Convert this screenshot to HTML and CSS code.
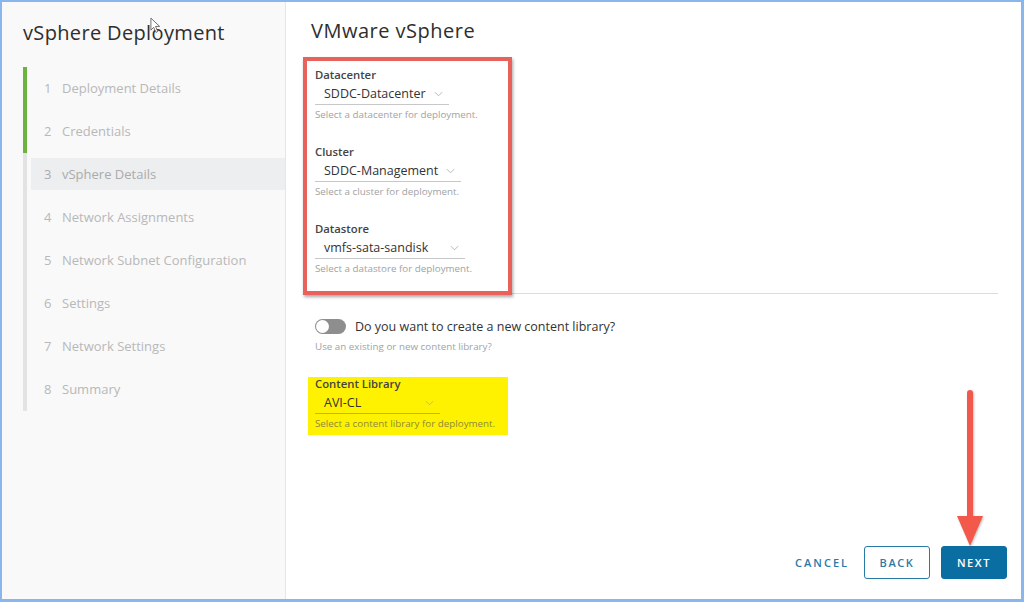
FILE: index.html
```html
<!DOCTYPE html>
<html lang="en">
<head>
<meta charset="utf-8">
<title>vSphere Deployment</title>
<link rel="stylesheet" href="styles.css">
</head>
<body>
<div class="frame">
  <aside class="sidebar">
    <h1 class="side-title">vSphere Deployment</h1>
    <ol class="steps">
      <li class="step done"><div class="step-inner"><span class="num">1</span>Deployment Details</div></li>
      <li class="step done"><div class="step-inner"><span class="num">2</span>Credentials</div></li>
      <li class="step active"><div class="step-inner"><span class="num">3</span>vSphere Details</div></li>
      <li class="step"><div class="step-inner"><span class="num">4</span>Network Assignments</div></li>
      <li class="step"><div class="step-inner"><span class="num">5</span>Network Subnet Configuration</div></li>
      <li class="step"><div class="step-inner"><span class="num">6</span>Settings</div></li>
      <li class="step"><div class="step-inner"><span class="num">7</span>Network Settings</div></li>
      <li class="step"><div class="step-inner"><span class="num">8</span>Summary</div></li>
    </ol>
  </aside>
  <main class="main">
    <h2 class="main-title">VMware vSphere</h2>
    <div class="form">
      <section class="fields annotated">
        <div class="field">
          <label class="label">Datacenter</label>
          <div class="select w-dc"><span class="value">SDDC-Datacenter</span><svg class="chev" viewBox="0 0 10 6"><path d="M1 1l4 4 4-4"/></svg></div>
          <div class="help">Select a datacenter for deployment.</div>
        </div>
        <div class="field">
          <label class="label">Cluster</label>
          <div class="select w-cl"><span class="value">SDDC-Management</span><svg class="chev" viewBox="0 0 10 6"><path d="M1 1l4 4 4-4"/></svg></div>
          <div class="help">Select a cluster for deployment.</div>
        </div>
        <div class="field last">
          <label class="label">Datastore</label>
          <div class="select w-ds"><span class="value">vmfs-sata-sandisk</span><svg class="chev" viewBox="0 0 10 6"><path d="M1 1l4 4 4-4"/></svg></div>
          <div class="help">Select a datastore for deployment.</div>
        </div>
      </section>
      <hr class="divider">
      <div class="toggle-row">
        <span class="toggle"><span class="knob"></span></span>
        <span class="toggle-text">Do you want to create a new content library?</span>
      </div>
      <div class="help toggle-help">Use an existing or new content library?</div>
      <div class="field highlight">
        <label class="label">Content Library</label>
        <div class="select w-cl2"><span class="value">AVI-CL</span><svg class="chev" viewBox="0 0 10 6"><path d="M1 1l4 4 4-4"/></svg></div>
        <div class="help">Select a content library for deployment.</div>
      </div>
    </div>
    <div class="actions">
      <button class="btn flat">CANCEL</button>
      <button class="btn outline">BACK</button>
      <button class="btn primary">NEXT</button>
    </div>
    <svg class="arrow" viewBox="0 0 40 170" aria-hidden="true">
      <line x1="20" y1="5" x2="20" y2="135" />
      <polygon points="7,128 33,128 20,158" />
    </svg>
  </main>
  <svg class="cursor" viewBox="0 0 12 18" aria-hidden="true">
    <path d="M1 1v13l3-3 2.5 5.5 2-1L6 10h4.5z"/>
  </svg>
</div>
</body>
</html>
```
FILE: styles.css
```css
*, *::before, *::after { box-sizing: border-box; }
html, body { margin: 0; padding: 0; }
body {
  width: 1024px;
  height: 602px;
  overflow: hidden;
  font-family: "Open Sans", "Liberation Sans", sans-serif;
  color: #333;
  background: #fff;
}
.frame {
  position: relative;
  display: flex;
  width: 1024px;
  height: 602px;
  border: 2px solid #8ab6ee;
  border-right-width: 3px;
  border-bottom-width: 3px;
}
.sidebar {
  width: 284px;
  flex: none;
  background: #f9f9f9;
  border-right: 1px solid #e6e6e6;
  padding: 19px 0 0 21px;
}
.side-title {
  margin: 0;
  font-size: 20px;
  line-height: 24px;
  font-weight: 400;
  color: #2e2e2e;
  letter-spacing: 0.35px;
}
.steps {
  list-style: none;
  margin: 22px 0 0 0;
  padding: 0;
}
.step {
  height: 43px;
  border-left: 4px solid #e3e3e3;
  padding: 5px 0 6px 4px;
}
.step.done { border-left-color: #6db33f; }
.step-inner {
  height: 32px;
  display: flex;
  align-items: center;
  padding-left: 13px;
  font-size: 13px;
  color: #b8b8b8;
}
.step.active .step-inner { background: #eceef0; color: #ababab; }
.num { width: 18px; }

.main {
  position: relative;
  flex: 1;
  display: flex;
  flex-direction: column;
  padding: 17px 0 0 25px;
}
.main-title {
  margin: 0;
  font-size: 20px;
  line-height: 24px;
  font-weight: 400;
  color: #2e2e2e;
  letter-spacing: 0.5px;
}
.form { padding-left: 4px; margin-top: 25px; }
.fields { position: relative; padding-bottom: 17px; }
.annotated::before {
  content: "";
  position: absolute;
  left: -12px;
  top: -11px;
  width: 209px;
  height: 238px;
  border: 4px solid #e8615a;
  box-shadow: 1px 2px 3px rgba(0,0,0,0.35);
  z-index: 2;
  pointer-events: none;
}
.field { margin-bottom: 23px; }
.field.last { margin-bottom: 0; }
.label {
  display: block;
  font-size: 11.3px;
  line-height: 14px;
  font-weight: 600;
  color: #444;
}
.select {
  position: relative;
  height: 23px;
  display: flex;
  align-items: center;
  padding-left: 9px;
  border-bottom: 1px solid #c8c8c8;
}
.value { font-size: 12.5px; color: #333; }
.chev {
  position: absolute;
  right: 6px;
  top: 9px;
  width: 9px;
  height: 6px;
  fill: none;
  stroke: #b0b0b0;
  stroke-width: 1;
}
.w-dc { width: 134px; }
.w-cl { width: 146px; }
.w-ds { width: 150px; }
.w-cl2 { width: 125px; }
.help {
  margin-top: 3px;
  font-size: 9.8px;
  line-height: 14px;
  color: #a2a2a2;
}
.divider {
  margin: 0 0 0 -4px;
  width: 687px;
  border: 0;
  border-top: 1px solid #dcdcdc;
}
.toggle-row {
  margin-top: 24px;
  height: 16px;
  display: flex;
  align-items: center;
}
.toggle {
  position: relative;
  width: 31px;
  height: 15px;
  border-radius: 8px;
  background: #8e8e8e;
  margin-right: 9px;
}
.knob {
  position: absolute;
  left: 1px;
  top: 1px;
  width: 13px;
  height: 13px;
  border-radius: 50%;
  background: #fff;
}
.toggle-text { font-size: 12.5px; color: #333; }
.toggle-help { margin-top: 6px; }
.field.highlight {
  margin: 23px 0 0 -7px;
  width: 200px;
  padding: 0 0 4px 7px;
  background: #fff200;
}
.field.highlight .help { color: #8d8a3a; }
.field.highlight .select { border-bottom-color: #b8b04a; }

.actions {
  margin-top: auto;
  display: flex;
  justify-content: flex-end;
  align-items: center;
  gap: 11px;
  padding: 0 14px 20px 0;
}
.btn {
  height: 33px;
  font-family: inherit;
  font-size: 11px;
  font-weight: 600;
  letter-spacing: 1.6px;
  border-radius: 3px;
  cursor: pointer;
}
.btn.flat {
  background: none;
  border: 0;
  color: #2a7aa6;
  padding: 0 4px 0 6px;
  letter-spacing: 2px;
}
.btn.outline {
  width: 66px;
  background: #fff;
  border: 1px solid #2a7aa6;
  color: #2a7aa6;
}
.btn.primary {
  width: 66px;
  background: #0b6ea3;
  border: 1px solid #0b6ea3;
  color: #fff;
}
.arrow {
  position: absolute;
  left: 664px;
  top: 386px;
  width: 40px;
  height: 170px;
  overflow: visible;
  filter: drop-shadow(1px 1px 1px rgba(0,0,0,0.25));
}
.arrow line { stroke: #f2594b; stroke-width: 6; stroke-linecap: round; }
.arrow polygon { fill: #f2594b; }
.cursor {
  position: absolute;
  left: 148px;
  top: 15px;
  width: 11px;
  height: 17px;
  fill: #fff;
  stroke: #555;
  stroke-width: 0.9;
}
```
